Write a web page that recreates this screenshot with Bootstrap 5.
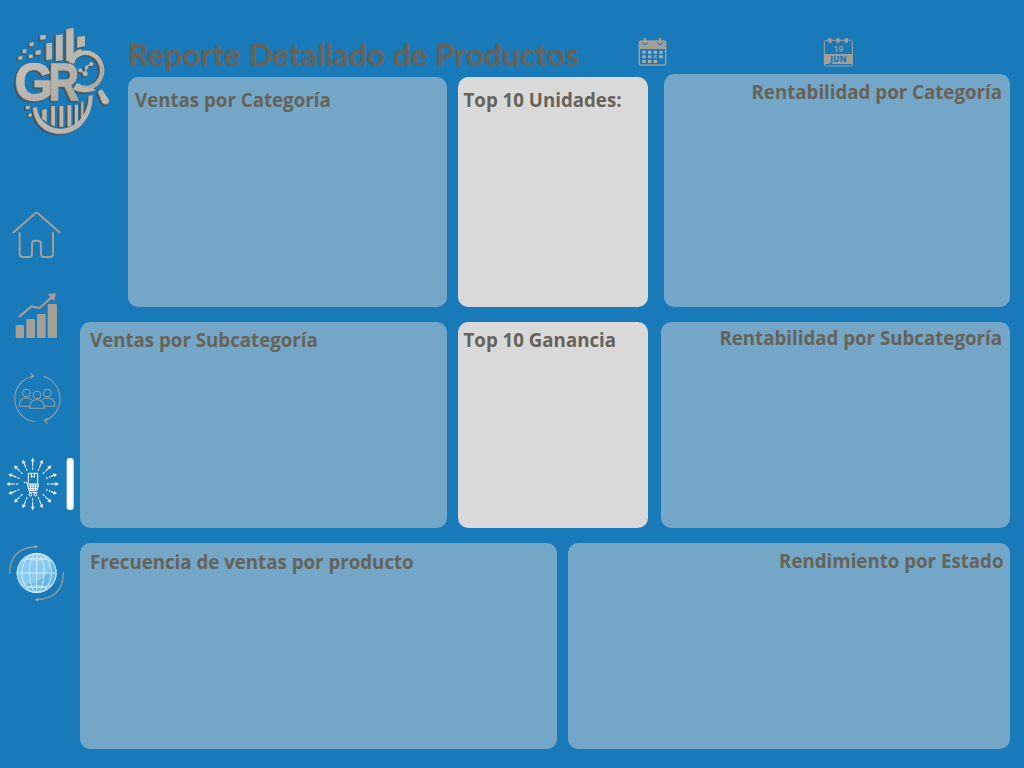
<!DOCTYPE html>
<html lang="es">
<head>
<meta charset="utf-8">
<meta name="viewport" content="width=device-width, initial-scale=1">
<title>Reporte Detallado de Productos</title>
<link href="https://cdn.jsdelivr.net/npm/bootstrap@5.3.0/dist/css/bootstrap.min.css" rel="stylesheet">
<style>
body{background:#197aba;color:#676358;font-family:"Open Sans",sans-serif;width:1024px;height:768px;overflow:hidden}
.side{width:80px;padding-top:20px}
.side svg{display:block;overflow:hidden;flex:none}
.side a{display:block;line-height:0}
.main-area{width:929.5px}
.head-bar{height:77px;padding-left:48px}
.head-bar h1{font:700 31px/38px "Lato",sans-serif;margin:36px 0 0;white-space:nowrap;width:500px}
.panel{background:#73a6c7;border-radius:10px;padding:0 10px;font-size:18.7px;line-height:26px;font-weight:700;white-space:nowrap}
.panel h2{font:inherit;margin:0}
.panel-light{background:#d9d9d9;width:190.5px;padding:0 6px}
.r1{height:229.5px;padding-left:48px}
.r2,.r3{height:206px;margin-top:15.5px}
.r3{margin-top:15px}
</style>
</head>
<body class="d-flex">
<svg width="0" height="0" class="position-absolute">
<defs>
<linearGradient id="metal" x1="0" y1="0" x2="1" y2="1"><stop offset="0" stop-color="#c8c5bf"/><stop offset="1" stop-color="#a8a49d"/></linearGradient>
<filter id="depth" x="-10%" y="-10%" width="120%" height="120%" color-interpolation-filters="sRGB"><feDropShadow dx="-2.5" dy="1.5" stdDeviation=".7" flood-color="#77746c"/><feDropShadow dx="-3" dy="2" stdDeviation="1" flood-color="#45443f"/></filter>
<g id="ray"><path d="M0-43V-74" stroke="#fff" stroke-width="3" stroke-dasharray="7 3 30"/><path d="M-6-68L0-79L6-68Z" fill="#e8f4fb"/></g>
</defs>
</svg>
<nav class="side d-flex flex-column flex-shrink-0 position-relative z-1">
<svg width="125" height="125" viewBox="0 0 375 375" style="margin-bottom:55px">
<g filter="url(#depth)" fill="#bab7b1">
<path d="M121 46l16-2v13l-16 2zM89 68l12-2v11l-12 2zM68 89l11-2v11l-11 2zM87 105l11-2v10l-11 2zM55 110l12-2v10l-12 2zM107 92l15-2v13l-15 2zM139 70l17-2v50l-17 2zM168 46l20-3v78l-20 2zM199 27l22-3v77l-12 22-10 1zM232 50l23-2v30l-23 5zM78 258l11-1v10l-11 1zM86 281l9-1v9l-9 1z"/>
<path d="M127 270l13-3v40l-13-11zM154 258h11v61l-11-5zM179 258h11v62h-11zM203 256h11v61l-11 3zM225 254h9v53l-9 6zM244 245h6v53l-6 6z"/>
<path d="M99 263L111 262C112 296 145 328 184 326C230 324 266 282 266 228L278 225C279 286 242 340 184 341C132 342 102 308 99 263Z"/>
<path d="M213 129A49 53 0 1 1 229 194" fill="none" stroke="url(#metal)" stroke-width="13"/>
<path d="M209 128Q212 96 241 87L252 97Q228 105 223 130ZM230 190Q247 209 277 203L288 211Q247 224 220 207Z"/>
<path d="M294 215L305 207L327 240Q329 252 316 253Q310 253 307 247Z"/>
<path d="M239 151L255 160L260 139L275 132" fill="none" stroke="#bab7b1" stroke-width="4"/><circle cx="241" cy="151" r="6"/><circle cx="256" cy="161" r="7"/><circle cx="260" cy="142" r="5"/><circle cx="274" cy="132" r="6"/>
</g>
<g filter="url(#depth)" fill="url(#metal)" stroke="url(#metal)" stroke-width="4" font-family="Liberation Sans,sans-serif" font-weight="700" font-size="158">
<text y="240"><tspan x="44" textLength="115" lengthAdjust="spacingAndGlyphs">G</tspan><tspan x="147" textLength="90" lengthAdjust="spacingAndGlyphs">R</tspan></text>
</g>
</svg>
<a href="#" aria-label="Inicio" style="margin-bottom:7px"><svg width="75" height="75" viewBox="0 0 225 225" fill="none" stroke="#a39e96" stroke-width="6" stroke-linecap="round" stroke-linejoin="round"><path d="M41 97L103 42Q109 35 116 42L178 97M59 99V162Q59 171 68 171H88Q96 171 96 163V132Q96 122 105 122H114Q123 122 123 132V163Q123 171 131 171H150Q159 171 159 162V99"/></svg></a>
<a href="#" aria-label="Ventas" style="margin-bottom:10px"><svg width="75" height="70" viewBox="0 0 225 210" fill="#a39e96"><rect x="47" y="129" width="25" height="39" rx="3"/><rect x="79" y="111" width="26" height="57" rx="3"/><rect x="111" y="96" width="26" height="72" rx="3"/><rect x="143" y="66" width="28" height="102" rx="3"/><path d="M59 103L94 73L119 78L157 44" fill="none" stroke="#a39e96" stroke-width="6.5" stroke-linecap="round" stroke-linejoin="round"/><path d="M143 36L168 34L162 58Z"/></svg></a>
<a href="#" aria-label="Clientes" style="margin-bottom:15px"><svg width="75" height="70" viewBox="0 0 225 210" fill="none" stroke="#989e9c" stroke-width="3.2"><path d="M101 41A70 70 0 0 0 104 179M130 43A70 70 0 0 1 134 176M90 33L102 42L91 50M143 168L133 176L143 184"/><circle cx="79" cy="93" r="11.5"/><circle cx="142" cy="93" r="11.5"/><circle cx="111" cy="99" r="11.5"/><path d="M92 133H58Q57 108 79 107Q90 107 96 114M129 133H164Q165 108 143 107Q132 107 126 114M88 139Q88 113 111 113Q133 113 133 139Z"/></svg></a>
<a href="#" aria-label="Productos" aria-current="page" style="margin-bottom:13px"><svg width="80" height="75" viewBox="0 0 240 225">
<g transform="translate(98 111)"><use href="#ray"/><use href="#ray" transform="rotate(22.5)"/><use href="#ray" transform="rotate(45)"/><use href="#ray" transform="rotate(67.5)"/><use href="#ray" transform="rotate(90)"/><use href="#ray" transform="rotate(112.5)"/><use href="#ray" transform="rotate(135)"/><use href="#ray" transform="rotate(157.5)"/><use href="#ray" transform="rotate(180)"/><use href="#ray" transform="rotate(202.5)"/><use href="#ray" transform="rotate(225)"/><use href="#ray" transform="rotate(247.5)"/><use href="#ray" transform="rotate(270)"/><use href="#ray" transform="rotate(292.5)"/><use href="#ray" transform="rotate(315)"/><use href="#ray" transform="rotate(337.5)"/></g>
<g fill="none" stroke="#fff" stroke-width="3"><path d="M85 109V79H113V109M94 79V91L98 88L103 91V79M71 105L81 108L89 136H113M82 111H116L111 130H88M85 117H114M87 124H112M92 111V130M99 111V130M106 111V130"/><circle cx="91" cy="143" r="4"/><circle cx="106" cy="143" r="4"/></g>
<rect x="200" y="33" width="21" height="156" rx="9" fill="#fff"/></svg></a>
<a href="#" aria-label="Estados"><svg width="80" height="75" viewBox="0 0 240 225"><circle cx="110" cy="114" r="60" fill="#8accf1"/><path d="M154 74Q158 119 104 143Q81 147 65 153A60 60 0 0 0 152 156A60 60 0 0 0 154 74" fill="#6cb7e2"/><g fill="none" stroke="#d2edfb" stroke-width="2.8"><circle cx="110" cy="114" r="58.5"/><path d="M110 54V174M50 114H170M62 78Q110 62 158 78M62 150Q110 166 158 150M77 66Q110 86 143 66M77 162Q110 142 143 162"/><ellipse cx="110" cy="114" rx="22" ry="59"/><ellipse cx="110" cy="114" rx="44" ry="59"/></g><g fill="none" stroke="#9b9e99" stroke-width="3.8"><path d="M29 117Q29 37 111 35M190 112Q190 193 107 194"/></g><path d="M104 29L115 35L104 41ZM115 188L104 194L115 200Z" fill="#a39e96"/></svg></a>
</nav>
<main class="main-area d-flex flex-column">
<header class="head-bar d-flex align-items-start">
<h1><svg width="470" height="41" class="d-block overflow-visible"><text x="0" y="30" fill="#676358" stroke="#676358" stroke-width=".25" textLength="451" lengthAdjust="spacingAndGlyphs">Reporte Detallado de Productos</text></svg></h1>
<svg width="36" height="34" viewBox="855 15 108 102" style="margin:35px 0 0 7px"><path d="M866 37Q866 31 873 31H942Q949 31 949 37V101Q949 107 943 107H872Q866 107 866 101Z" fill="#a39e96"/><path d="M870 57H945V103H870Z" fill="#197aba"/><g fill="none" stroke="#197aba" stroke-width="3"><path d="M879 37V41Q885 47 891 41V37M924 37V41Q930 47 936 41V37"/></g><path d="M885 24V39M930 24V39" stroke="#a39e96" stroke-width="6"/><path d="M877 62h10v9h-10zM894 62h10v9h-10zM911 62h10v9h-10zM928 62h10v9h-10zM877 76h10v9h-10zM894 76h10v9h-10zM911 76h10v9h-10zM928 76h10v9h-10zM877 90h10v9h-10zM894 90h10v9h-10zM911 90h10v9h-10z" fill="#b0aba3"/><path d="M912 79L917 84L925 74" fill="none" stroke="#197aba" stroke-width="3"/></svg>
<svg width="36" height="36" viewBox="36 18 108 108" style="margin:36px 0 0 151px"><rect x="43" y="31" width="84" height="77" rx="6" fill="none" stroke="#a39e96" stroke-width="3"/><path d="M43 72H127V102H43Z" fill="#a39e96"/><path d="M54 31H116" stroke="#197aba" stroke-width="4"/><path d="M57 31H113" stroke="#a39e96" stroke-width="3"/><g fill="#a39e96"><rect x="55" y="24" width="10" height="15" rx="4"/><rect x="79" y="24" width="10" height="15" rx="4"/><rect x="104" y="24" width="10" height="15" rx="4"/></g><text x="85" y="65" text-anchor="middle" font-family="Open Sans" font-size="27" font-weight="600" textLength="31" lengthAdjust="spacingAndGlyphs" fill="#a39e96">19</text><text x="85" y="96" text-anchor="middle" font-family="Open Sans" font-size="24" font-weight="800" textLength="50" lengthAdjust="spacingAndGlyphs" fill="#197aba">JUN</text></svg>
</header>
<div class="r1 d-flex flex-shrink-0">
<section class="panel" style="width:319px;padding:10px 7px"><h2>Ventas por Categoría</h2></section>
<section class="panel panel-light" style="margin:0 15.5px 0 10.5px;padding-top:10px"><h2>Top 10 Unidades:</h2></section>
<section class="panel flex-grow-1 text-end" style="margin-top:-3.5px;padding:5.5px 7.5px"><h2>Rentabilidad por Categoría</h2></section>
</div>
<div class="r2 d-flex flex-shrink-0">
<section class="panel" style="width:367px;padding-top:5px"><h2>Ventas por Subcategoría</h2></section>
<section class="panel panel-light" style="margin:0 12.5px 0 10.5px;padding-top:5px"><h2>Top 10 Ganancia</h2></section>
<section class="panel flex-grow-1 text-end" style="padding:3px 7.5px"><h2>Rentabilidad por Subcategoría</h2></section>
</div>
<div class="r3 d-flex flex-shrink-0">
<section class="panel" style="width:477px;padding-top:6px;margin-right:11px"><h2>Frecuencia de ventas por producto</h2></section>
<section class="panel flex-grow-1 text-end" style="padding:5px 6px"><h2>Rendimiento por Estado</h2></section>
</div>
</main>
<script src="https://cdn.jsdelivr.net/npm/bootstrap@5.3.0/dist/js/bootstrap.bundle.min.js"></script>
</body>
</html>
